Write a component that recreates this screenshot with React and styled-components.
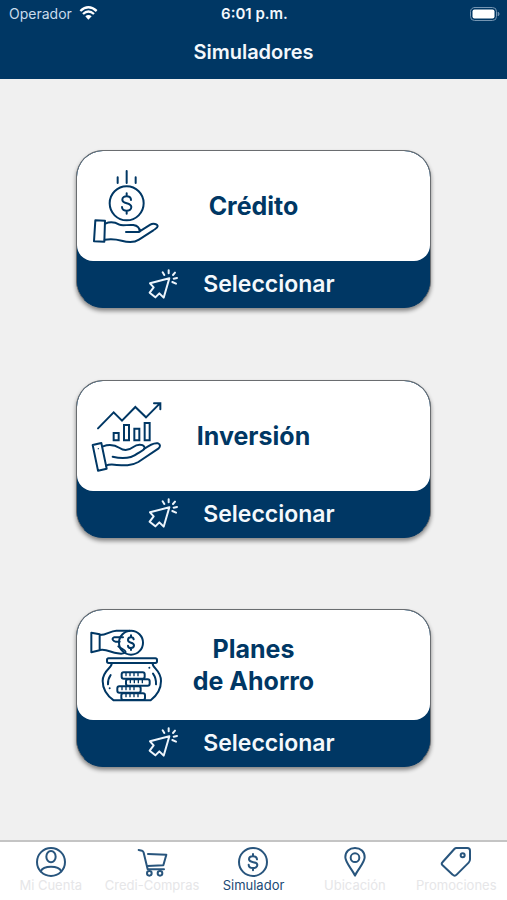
import React from "react";
import styled, { createGlobalStyle } from "styled-components";

const navy = "#003764";

const GlobalStyle = createGlobalStyle`
  *, *::before, *::after { box-sizing: border-box; }
  body {
    margin: 0;
    background: #f0f0f0;
    color: ${navy};
    font-family: Inter, "Liberation Sans", sans-serif;
  }
`;

const Screen = styled.div`
  display: flex;
  flex-direction: column;
  min-height: 100vh;
`;

const Header = styled.header`
  background: ${navy};
  color: #f4f8fc;
  padding-bottom: 13px;
`;

const StatusBar = styled.div`
  display: grid;
  grid-template-columns: 1fr auto 1fr;
  align-items: center;
  height: 27px;
  padding: 0 7px 0 9px;
  font-size: 14px;
  line-height: 20px;
`;

const Carrier = styled.span`
  display: flex;
  align-items: center;
  gap: 7px;
  color: #c9dcec;
`;

const Clock = styled.time`
  font-size: 15px;
  font-weight: 600;
`;

const BatterySlot = styled.span`
  display: flex;
  justify-content: flex-end;
`;

const Title = styled.h1`
  margin: 11px 0 0;
  font-size: 20px;
  line-height: 28px;
  font-weight: 600;
  text-align: center;
`;

const Main = styled.main`
  flex: 1;
  display: flex;
  flex-direction: column;
  align-items: center;
  justify-content: space-evenly;
  padding-bottom: 2px;
`;

const Card = styled.section`
  width: 70%;
  border: 1px solid #6a6d70;
  border-bottom-color: ${navy};
  border-radius: 27px;
  background: ${navy};
  box-shadow: 0 3px 4px rgba(0, 0, 0, 0.45);
  overflow: hidden;
`;

const CardBody = styled.div`
  display: grid;
  grid-template-columns: 72px 1fr 72px;
  align-items: center;
  min-height: 110px;
  padding: 0 13px;
  border-radius: 26px 26px 16px 16px;
  background: #fff;
`;

const CardTitle = styled.h2`
  margin: 0;
  font-size: 25px;
  line-height: 32px;
  font-weight: 700;
  text-align: center;
  white-space: pre-line;
`;

const SelectButton = styled.button`
  display: flex;
  align-items: center;
  justify-content: center;
  gap: 24px;
  width: 100%;
  height: 46px;
  padding: 0 24px 0 0;
  border: 0;
  background: ${navy};
  color: #f4f8fc;
  font: 600 23px/28px Inter, "Liberation Sans", sans-serif;
  cursor: pointer;
`;

const TabBar = styled.nav`
  display: grid;
  grid-template-columns: repeat(5, 1fr);
  height: 60px;
  padding-top: 4px;
  border-top: 2px solid #c4c4c4;
  background: #fff;
`;

const Tab = styled.a`
  display: flex;
  flex-direction: column;
  align-items: center;
  color: ${(p) => (p.$active ? "#1c4a75" : "#e6e6e8")};
  font-size: 13px;
  line-height: 14px;
  text-decoration: none;
  white-space: nowrap;
`;

const Drawing = styled.svg`
  display: block;
  flex: none;
  fill: none;
  stroke: ${(p) => p.$color || navy};
  stroke-width: ${(p) => p.$stroke || 6};
  stroke-linecap: round;
  stroke-linejoin: round;
`;

const WifiIcon = () => (
  <Drawing width="19" height="15" viewBox="0 0 57 45" $color="#fff" $stroke={7} aria-hidden="true">
    <path d="M4 15Q28-7 53 15M12 24Q28 9 45 24" strokeLinecap="butt" />
    <path d="M19 31Q28 23 38 31L28 41Z" fill="#fff" stroke="none" />
  </Drawing>
);

const BatteryIcon = () => (
  <Drawing width="30" height="14" viewBox="0 0 30 14" $color="#7595b2" $stroke={1} aria-hidden="true">
    <rect x="0.5" y="0.5" width="26" height="13" rx="4" />
    <rect x="2.5" y="2.5" width="22" height="9" rx="2" fill="#fff" stroke="none" />
    <path d="M28.5 5.5Q30 7 28.5 8.5Z" fill="#7595b2" />
  </Drawing>
);

const CreditIcon = () => (
  <Drawing width="72" height="80" viewBox="60 63 216 240" aria-hidden="true">
    <path d="M170 78V114M143 97V114M197 97V114" />
    <circle cx="170" cy="175" r="51" />
    <path d="M183 165C183 150 157 150 157 164C157 178 184 171 184 186C184 201 156 201 156 186M170 145V153M170 198V206" />
    <path d="M76 226L105 227L103 290L72 289Z" />
    <path d="M106 236C119 230 134 231 148 239C157 244 174 238 190 240C203 242 209 249 209 259L241 239C249 234 263 237 263 244C263 249 255 252 250 256L207 284C190 295 172 292 155 287C137 282 121 281 104 284" />
    <path d="M168 261H205C210 261 211 258 209 254" />
  </Drawing>
);

const InvestmentIcon = () => (
  <Drawing width="72" height="80" viewBox="60 60 216 240" aria-hidden="true">
    <path d="M84 157L131 109L156 134L196 93L228 124L269 83M252 82H271V100" strokeLinejoin="miter" />
    <path d="M131 171H146V193H131ZM162 147H177V193H162ZM193 158H208V193H193ZM224 141H239V193H224Z" strokeLinejoin="miter" />
    <path d="M68 207L94 201L110 278L84 284Z" />
    <path d="M99 211C119 204 135 207 149 216C162 225 178 222 190 213C201 205 217 204 223 212C228 221 211 226 203 232C181 249 156 249 128 242" />
    <path d="M222 219C238 207 254 200 264 202C272 205 271 212 266 217L205 258C181 272 157 268 133 266C122 265 114 266 108 269" />
    <circle cx="85" cy="218" r="2" fill={navy} stroke="none" />
  </Drawing>
);

const SavingsIcon = () => (
  <Drawing width="72" height="80" viewBox="60 57 216 240" aria-hidden="true">
    <path d="M64 80L89 85V133L64 139ZM90 87C111 87 119 75 139 74H179M90 132C110 128 123 140 143 142C153 144 163 143 167 138C166 130 153 129 145 121M159 94H132C123 98 130 106 137 107H149" />
    <circle cx="183" cy="110" r="36" />
    <path d="M191 100C190 91 174 92 174 102C174 113 192 107 192 118C192 129 174 128 174 119M183 88V94M183 126V132" />
    <rect x="111" y="157" width="150" height="14" rx="5" />
    <path d="M125 173C125 187 98 193 98 225C98 250 110 268 131 283H242C261 268 273 250 273 225C273 193 248 187 248 173" />
    <path d="M122 207Q113 220 114 235M249 203Q259 217 258 235M119 247V247M238 185V185" />
    <rect x="155" y="199" width="69" height="19" rx="6" />
    <rect x="168" y="220" width="71" height="19" rx="6" />
    <rect x="142" y="241" width="70" height="19" rx="6" />
    <rect x="154" y="262" width="71" height="20" rx="6" />
    <path d="M168 201V209M180 201V209M192 201V209M204 201V209M181 222V230M193 222V230M205 222V230M217 222V230M156 243V251M168 243V251M180 243V251M192 243V251M168 264V272M180 264V272M192 264V272M204 264V272" strokeWidth="4" />
  </Drawing>
);

const ClickIcon = () => (
  <Drawing width="31" height="31" viewBox="237 58 93 93" $color="#edf5fc" aria-hidden="true">
    <path d="M301 86L243 101L254 113L242 129L259 143L271 131L284 144Z" />
    <path d="M299 62V71M281 68L286 76M318 69L312 76M314 87L324 85M310 97L321 102" />
  </Drawing>
);

const TabDrawing = ({ children }) => (
  <Drawing width="32" height="32" viewBox="0 0 96 96" $color="#28557d" aria-hidden="true">
    {children}
  </Drawing>
);

const tabs = [
  {
    label: "Mi Cuenta",
    icon: (
      <>
        <circle cx="48" cy="48" r="42" />
        <ellipse cx="48" cy="32" rx="14" ry="17" />
        <path d="M17 76C26 58 70 58 79 76" />
      </>
    ),
  },
  {
    label: "Credi-Compras",
    icon: (
      <>
        <path d="M8 12L18 14C21 15 22 17 23 20L35 70H84M36 24L91 26L82 58L34 60" />
        <circle cx="40" cy="82" r="7" />
        <circle cx="72" cy="82" r="7" />
      </>
    ),
  },
  {
    label: "Simulador",
    active: true,
    icon: (
      <>
        <circle cx="48" cy="48" r="42" />
        <path d="M60 40C59 27 36 28 36 40C36 53 61 44 61 57C61 70 35 69 35 56M48 24V30M48 67V73" />
      </>
    ),
  },
  {
    label: "Ubicación",
    icon: (
      <>
        <path d="M48 89C42 73 19 51 19 34C19 17 31 6 48 6C65 6 77 17 77 34C77 51 54 73 48 89Z" />
        <circle cx="48" cy="35" r="13" />
      </>
    ),
  },
  {
    label: "Promociones",
    icon: (
      <>
        <path d="M49 6H82Q90 6 90 14V40Q90 46 86 50L50 86Q44 92 38 86L7 57Q3 53 8 48L43 9Q46 6 49 6Z" />
        <circle cx="68" cy="28" r="6" />
      </>
    ),
  },
];

const simulators = [
  { title: "Crédito", Icon: CreditIcon },
  { title: "Inversión", Icon: InvestmentIcon },
  { title: "Planes\nde Ahorro", Icon: SavingsIcon },
];

export default function App() {
  return (
    <Screen>
      <GlobalStyle />
      <Header>
        <StatusBar>
          <Carrier>
            Operador
            <WifiIcon />
          </Carrier>
          <Clock>6:01 p.m.</Clock>
          <BatterySlot>
            <BatteryIcon />
          </BatterySlot>
        </StatusBar>
        <Title>Simuladores</Title>
      </Header>
      <Main>
        {simulators.map(({ title, Icon }) => (
          <Card key={title}>
            <CardBody>
              <Icon />
              <CardTitle>{title}</CardTitle>
            </CardBody>
            <SelectButton type="button">
              <ClickIcon />
              Seleccionar
            </SelectButton>
          </Card>
        ))}
      </Main>
      <TabBar>
        {tabs.map(({ label, icon, active }) => (
          <Tab key={label} href="#" $active={active} aria-current={active ? "page" : undefined}>
            <TabDrawing>{icon}</TabDrawing>
            {label}
          </Tab>
        ))}
      </TabBar>
    </Screen>
  );
}
